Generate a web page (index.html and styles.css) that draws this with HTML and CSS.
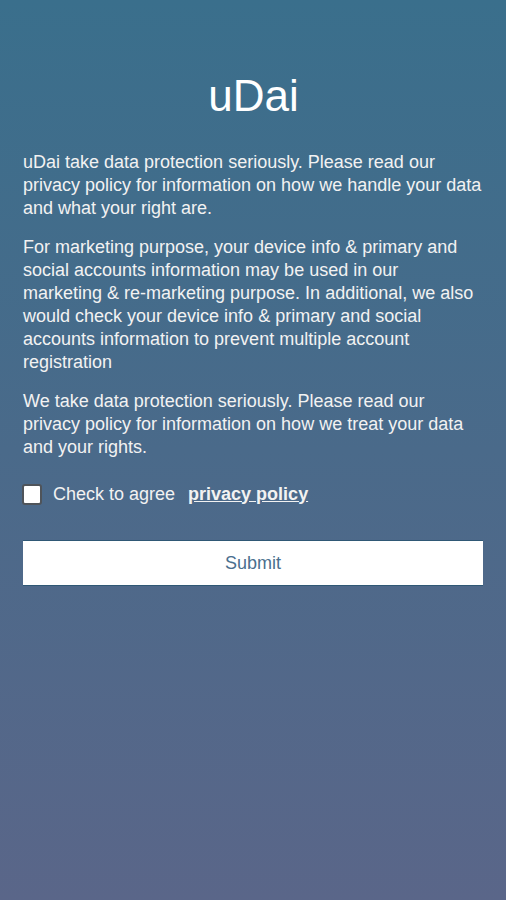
FILE: index.html
```html
<!DOCTYPE html>
<html>
<head>
<meta charset="utf-8">
<link rel="stylesheet" href="styles.css">
</head>
<body>
<main class="page">
  <h1 class="title">uDai</h1>
  <p class="para">uDai take data protection seriously. Please read our privacy policy for information on how we handle your data and what your right are.</p>
  <p class="para">For marketing purpose, your device info &amp; primary and social accounts information may be used in our marketing &amp; re-marketing purpose. In additional, we also would check your device info &amp; primary and social accounts information to prevent multiple account registration</p>
  <p class="para">We take data protection seriously. Please read our privacy policy for information on how we treat your data and your rights.</p>
  <label class="agree">
    <span class="box"></span>
    <span class="agree-text">Check to agree</span>
    <a class="policy">privacy policy</a>
  </label>
  <button class="submit">Submit</button>
</main>
</body>
</html>
```
FILE: styles.css
```css
html, body {
  margin: 0;
  height: 100%;
}
body {
  background: linear-gradient(to bottom, #3a6f8c 0%, #4a6a8a 50%, #5a6689 100%);
  font-family: "Liberation Sans", Arial, sans-serif;
  color: #f2f2f2;
}
.page {
  padding: 0 24px 0 23px;
  display: flex;
  flex-direction: column;
}
.title {
  margin: 72px 0 0;
  text-align: center;
  font-weight: normal;
  font-size: 44px;
  line-height: 48px;
  color: #ffffff;
  padding-left: 2px;
}
.para {
  margin: 31px 0 0;
  font-size: 18px;
  line-height: 23px;
}
.para + .para {
  margin-top: 16px;
}
.agree {
  display: flex;
  align-items: center;
  margin-top: 23px;
  font-size: 18px;
  height: 24px;
}
.box {
  width: 16px;
  height: 17px;
  background: #fff;
  border: 2px solid #4f545a;
  border-radius: 3px;
  margin-right: 11px;
  margin-left: -1px;
}
.agree-text {
  margin-right: 13px;
}
.policy {
  font-weight: bold;
  text-decoration: underline;
  color: #f2f2f2;
}
.submit {
  margin: 34px -1px 0 0;
  height: 46px;
  background: #fff;
  border: none;
  border-top: 1px solid #2f5875;
  border-bottom: 1px solid #2f5875;
  font-family: "Liberation Sans", Arial, sans-serif;
  font-size: 18px;
  color: #4a6f8e;
  padding: 0;
}
```
